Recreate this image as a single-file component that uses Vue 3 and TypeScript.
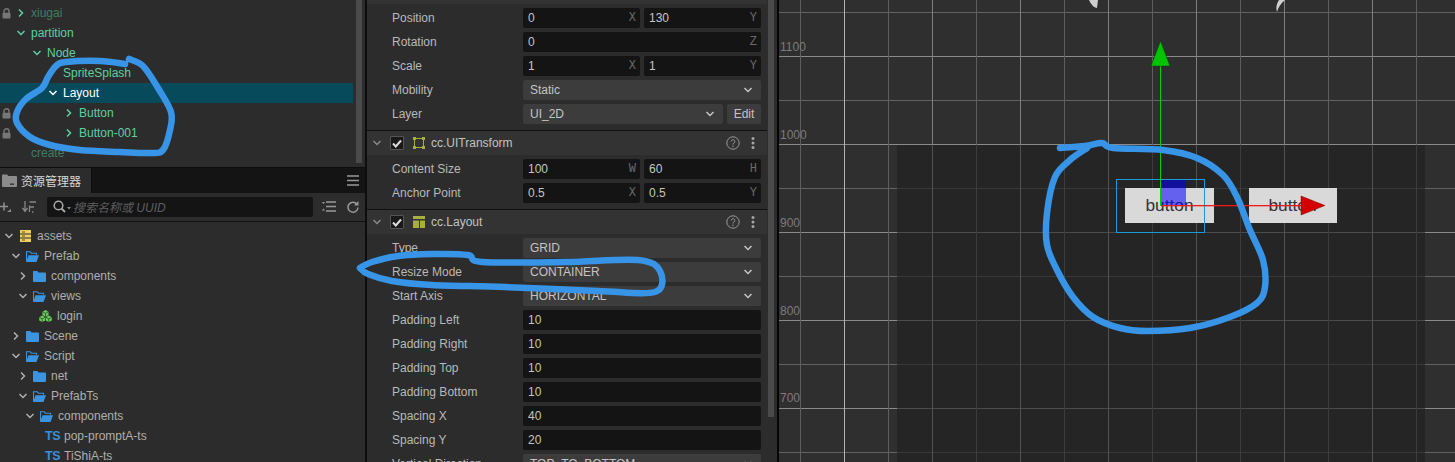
<template>
  <div class="app">
    <!-- left column: hierarchy + assets -->
    <div class="left">
      <div class="hierarchy">
        <div class="node-list">
          <div
            v-for="n in nodes"
            :key="n.name"
            class="node-row"
            :class="{ selected: n.selected, dim: n.dim }"
          >
            <span class="lock-cell">
              <svg v-if="n.locked" width="9" height="11" viewBox="0 0 9 11">
                <path d="M2 5V3.2a2.5 2.5 0 0 1 5 0V5" fill="none" stroke="#777" stroke-width="1.4" />
                <rect x="0.5" y="4.8" width="8" height="5.7" rx="1" fill="#777" />
              </svg>
            </span>
            <span class="indent" :style="{ width: n.depth * 16 + 'px' }"></span>
            <span class="chev-cell">
              <svg v-if="n.open !== undefined" width="10" height="10" viewBox="0 0 10 10">
                <path :d="n.open ? chevDown : chevRight" fill="none" stroke="currentColor" stroke-width="1.5" />
              </svg>
            </span>
            <span class="node-name">{{ n.name }}</span>
          </div>
        </div>
        <div class="hier-scroll"></div>
      </div>

      <div class="tab-bar">
        <div class="tab">
          <svg width="15" height="13" viewBox="0 0 15 13">
            <path d="M0 1.5A1 1 0 0 1 1 .5h4l1.5 1.5H14a1 1 0 0 1 1 1V12a1 1 0 0 1-1 1H1a1 1 0 0 1-1-1z" fill="#8c8c8c" />
            <rect x="8" y="9.5" width="4" height="1.3" fill="#2c2c2c" />
          </svg>
          <span>资源管理器</span>
        </div>
        <svg class="menu-icon" width="12" height="11" viewBox="0 0 12 11">
          <path d="M0 1h12M0 5.5h12M0 10h12" stroke="#999" stroke-width="1.6" />
        </svg>
      </div>

      <div class="toolbar">
        <svg class="tb-add" width="11" height="12" viewBox="0 0 11 12">
          <path d="M0 5.5h8M4 1.5v8" stroke="#8e8e8e" stroke-width="1.6" fill="none" />
          <path d="M7 11h4V8z" fill="#8e8e8e" />
        </svg>
        <svg class="tb-sort" width="15" height="12" viewBox="0 0 15 12">
          <path d="M3 0v9M.5 7 3 10.5 5.5 7M7.5 1H14M7.5 4.5V11M7.5 6H12M10 11h1.5" stroke="#858585" stroke-width="1.3" fill="none" />
        </svg>
        <div class="search">
          <svg width="19" height="13" viewBox="0 0 19 13">
            <circle cx="5.5" cy="5.5" r="4.3" fill="none" stroke="#aaa" stroke-width="1.5" />
            <path d="M8.5 8.5 12 12" stroke="#aaa" stroke-width="1.8" />
            <path d="M14 7h4l-2 2.5z" fill="#888" />
          </svg>
          <span>搜索名称或 UUID</span>
        </div>
        <svg class="tb-list" width="14" height="11" viewBox="0 0 14 11">
          <path d="M4 1h10M4 5.5h10M4 10h10" stroke="#999" stroke-width="1.3" />
          <path d="M0 1h3L1.5 3zM0 9.5h3L1.5 7.5z" fill="#999" />
        </svg>
        <svg class="tb-refresh" width="12" height="12" viewBox="0 0 12 12">
          <path d="M10 3.2A5 5 0 1 0 11 6.5" fill="none" stroke="#999" stroke-width="1.5" />
          <path d="M11.5 0v4.5H7z" fill="#999" />
        </svg>
      </div>

      <div class="asset-list">
        <div v-for="(a, i) in assets" :key="i" class="asset-row">
          <span class="indent" :style="{ width: a.depth * 7 + 'px' }"></span>
          <span class="asset-chev">
            <svg v-if="a.open !== undefined" width="10" height="10" viewBox="0 0 10 10">
              <path :d="a.open ? chevDown : chevRight" fill="none" stroke="#b0b0b0" stroke-width="1.5" />
            </svg>
          </span>
          <svg v-if="a.icon === 'db'" class="asset-icon db" width="11" height="12" viewBox="0 0 11 12">
            <rect width="11" height="12" fill="#f3cf62" />
            <path d="M0 4h11M0 8h11" stroke="#2c2c2c" stroke-width="1" />
            <path d="M2 2h3M2 6h3M2 10h3" stroke="#5b4a1a" stroke-width="1" />
          </svg>
          <svg v-else-if="a.icon === 'closed'" class="asset-icon" width="13" height="11" viewBox="0 0 13 11">
            <path d="M0 .8A.8.8 0 0 1 .8 0h3.5l1.2 1.5H12a1 1 0 0 1 1 1V10a1 1 0 0 1-1 1H1a1 1 0 0 1-1-1z" fill="#3a94e0" />
          </svg>
          <svg v-else-if="a.icon === 'opened'" class="asset-icon" width="13" height="11" viewBox="0 0 13 11">
            <path d="M.5 10V.8h3.8l1.2 1.5h5v1.500" fill="none" stroke="#3a94e0" stroke-width="1.1" />
            <path d="M0 11 2.5 4.2H13L10.5 11z" fill="#3a94e0" />
          </svg>
          <svg v-else-if="a.icon === 'prefab'" class="asset-icon prefab" width="13" height="12" viewBox="0 0 13 12">
            <path d="M6.5 0 9.5 1.7V5L6.5 6.7 3.5 5V1.7zM3.2 5.5l3 1.7v3.3L3.2 12 .2 10.5V7.2zM9.8 5.5l3 1.7v3.3L9.8 12l-3-1.5V7.2z" fill="#6ccb5f" />
            <path d="M3.5 1.7 6.5 3.4 9.5 1.7M6.5 3.4V6.7M.2 7.2l3 1.7 3-1.7M3.2 8.9V12M6.8 7.2l3 1.7 3-1.7M9.8 8.9V12" fill="none" stroke="#1f4d1c" stroke-width=".8" />
          </svg>
          <span v-else-if="a.icon === 'ts'" class="ts-icon">TS</span>
          <span class="asset-name">{{ a.name }}</span>
        </div>
      </div>
    </div>

    <!-- inspector -->
    <div class="inspector">
      <div class="top-sliver"></div>
      <section v-for="s in sections" :key="s.title || 'node'" class="section">
        <header v-if="s.title" class="sec-head">
          <svg width="10" height="10" viewBox="0 0 10 10">
            <path :d="chevDown" fill="none" stroke="#8a8a8a" stroke-width="1.5" />
          </svg>
          <span class="check">
            <svg width="10" height="9" viewBox="0 0 10 9">
              <path d="M1 4.5 3.8 7.5 9 1.5" fill="none" stroke="#ddd" stroke-width="2" />
            </svg>
          </span>
          <svg v-if="s.icon === 'transform'" class="sec-icon" width="12" height="12" viewBox="0 0 12 12">
            <rect x="1.5" y="1.5" width="9" height="9" fill="none" stroke="#a7b03a" stroke-width="1" />
            <path d="M0 0h3v3H0zM9 0h3v3H9zM0 9h3v3H0zM9 9h3v3H9z" fill="#a7b03a" />
          </svg>
          <svg v-else class="sec-icon" width="12" height="12" viewBox="0 0 12 12">
            <path d="M0 0h12v3H0zM0 4.5h6V12H0zM7 4.5h5V12H7z" fill="#a7b03a" />
          </svg>
          <span class="sec-title">{{ s.title }}</span>
          <svg class="help" width="14" height="14" viewBox="0 0 14 14">
            <circle cx="7" cy="7" r="6.2" fill="none" stroke="#9a9a9a" stroke-width="1" />
            <path d="M5.2 5.5a1.8 1.8 0 1 1 2.8 1.5c-.7.4-1 .7-1 1.5" fill="none" stroke="#9a9a9a" stroke-width="1" />
            <circle cx="7" cy="10.3" r=".7" fill="#9a9a9a" />
          </svg>
          <svg class="dots" width="4" height="12" viewBox="0 0 4 12">
            <circle cx="2" cy="1.5" r="1.5" fill="#a5a5a5" />
            <circle cx="2" cy="6" r="1.5" fill="#a5a5a5" />
            <circle cx="2" cy="10.5" r="1.5" fill="#a5a5a5" />
          </svg>
        </header>
        <div class="sec-body">
          <div v-for="r in s.rows" :key="r.label" class="prop">
            <label class="prop-label">{{ r.label }}</label>
            <div class="prop-fields">
              <div
                v-for="(f, fi) in r.fields"
                :key="fi"
                class="field"
                :class="'field-' + f.kind"
              >
                <span class="field-value">{{ f.value }}</span>
                <span v-if="f.suffix" class="suffix">{{ f.suffix }}</span>
                <svg v-if="f.kind === 'select'" width="10" height="10" viewBox="0 0 10 10">
                  <path :d="chevDown" fill="none" stroke="#c4c4c4" stroke-width="1.5" />
                </svg>
              </div>
            </div>
          </div>
        </div>
      </section>
    </div>

    <div class="gutter"><div class="insp-scroll"></div></div>

    <!-- scene view -->
    <div class="scene">
      <svg width="676" height="462" viewBox="779 0 676 462" shape-rendering="crispEdges">
        <rect x="779" y="0" width="676" height="462" fill="#2f2f2f" />
        <line v-for="l in hLines" :key="'h' + l.y" x1="779" x2="1455" :y1="l.y + 0.5" :y2="l.y + 0.5" :stroke="l.color" />
        <line v-for="l in vLines" :key="'v' + l.x" :x1="l.x + 0.5" :x2="l.x + 0.5" y1="0" y2="462" :stroke="l.color" />
        <rect x="897" y="145" width="528" height="317" fill="#252525" />
        <line v-for="l in hLines.filter(h => h.y > 144)" :key="'dh' + l.y" x1="897" x2="1425" :y1="l.y + 0.5" :y2="l.y + 0.5" :stroke="l.dark" />
        <line v-for="l in vLines.filter(v => v.x > 897 && v.x < 1425)" :key="'dv' + l.x" :x1="l.x + 0.5" :x2="l.x + 0.5" y1="145" y2="462" :stroke="l.dark" />

        <text v-for="t in rulers" :key="t.label" x="780" :y="t.y" class="ruler">{{ t.label }}</text>

        <g shape-rendering="auto">
          <path d="M1089 0H1098L1097 8Q1092 7 1089 0Z" fill="#cfcfcf" />
          <path d="M1279 0H1285Q1279 5 1277 12Q1275 6 1279 0Z" fill="#cfcfcf" />
        </g>

        <!-- the two buttons -->
        <rect x="1125" y="188" width="89" height="35" rx="1" fill="#d9d9d9" />
        <rect x="1249" y="188" width="88" height="35" rx="1" fill="#d9d9d9" />
        <text x="1169.5" y="211" class="btn-text" text-anchor="middle">button</text>
        <text x="1292.5" y="211" class="btn-text" text-anchor="middle">button</text>

        <!-- gizmo -->
        <rect x="1161" y="180" width="25" height="25" fill="#0000ff" fill-opacity="0.55" />
        <rect x="1116.5" y="179.5" width="88" height="52.5" fill="none" stroke="#1c9ad6" />
        <rect x="1160" y="64" width="1" height="142" fill="#00d000" />
        <rect x="1161" y="205" width="142" height="1" fill="#f01818" />
        <rect x="1161" y="206" width="142" height="1" fill="#f01818" fill-opacity="0.3" />
        <g shape-rendering="auto">
          <path d="M1160.5 41 1170 66H1151Z" fill="#00c400" stroke="#0a3a0a" stroke-width="0.5" />
          <path d="M1325 205.5 1301 196V215Z" fill="#d40000" stroke="#7a0a0a" stroke-width="0.5" />
        </g>
      </svg>
    </div>

    <!-- hand drawn marks on top of everything -->
    <svg class="ink" width="1455" height="462" viewBox="0 0 1455 462">
      <path v-for="(d, i) in inkPaths" :key="i" :d="d" fill="none" stroke="#3794e6" stroke-width="6.5" stroke-linecap="round" stroke-linejoin="round" />
    </svg>
  </div>
</template>

<script setup lang="ts">
type Pt = [number, number]

interface TreeNode {
  name: string
  depth: number
  open?: boolean
  locked?: boolean
  dim?: boolean
  selected?: boolean
}

interface Asset {
  name: string
  depth: number
  open?: boolean
  icon: 'db' | 'closed' | 'opened' | 'prefab' | 'ts'
}

interface Field {
  kind: 'input' | 'select' | 'button'
  value: string
  suffix?: string
}

const chevDown = 'M1.5 3 5 6.5 8.5 3'
const chevRight = 'M3 1.5 6.5 5 3 8.5'

const nodes: TreeNode[] = [
  { name: 'xiugai', depth: 0, open: false, locked: true, dim: true },
  { name: 'partition', depth: 0, open: true },
  { name: 'Node', depth: 1, open: true },
  { name: 'SpriteSplash', depth: 2 },
  { name: 'Layout', depth: 2, open: true, selected: true },
  { name: 'Button', depth: 3, open: false, locked: true },
  { name: 'Button-001', depth: 3, open: false, locked: true },
  { name: 'create', depth: 0, dim: true }
]

const assets: Asset[] = [
  { name: 'assets', depth: 0, open: true, icon: 'db' },
  { name: 'Prefab', depth: 1, open: true, icon: 'opened' },
  { name: 'components', depth: 2, open: false, icon: 'closed' },
  { name: 'views', depth: 2, open: true, icon: 'opened' },
  { name: 'login', depth: 3, icon: 'prefab' },
  { name: 'Scene', depth: 1, open: false, icon: 'closed' },
  { name: 'Script', depth: 1, open: true, icon: 'opened' },
  { name: 'net', depth: 2, open: false, icon: 'closed' },
  { name: 'PrefabTs', depth: 2, open: true, icon: 'opened' },
  { name: 'components', depth: 3, open: true, icon: 'opened' },
  { name: 'pop-promptA-ts', depth: 4, icon: 'ts' },
  { name: 'TiShiA-ts', depth: 4, icon: 'ts' }
]

const input = (value: string, suffix?: string): Field => ({ kind: 'input', value, suffix })
const select = (value: string): Field => ({ kind: 'select', value })

const sections = [
  {
    title: '',
    icon: '',
    rows: [
      { label: 'Position', fields: [input('0', 'X'), input('130', 'Y')] },
      { label: 'Rotation', fields: [input('0', 'Z')] },
      { label: 'Scale', fields: [input('1', 'X'), input('1', 'Y')] },
      { label: 'Mobility', fields: [select('Static')] },
      { label: 'Layer', fields: [select('UI_2D'), { kind: 'button', value: 'Edit' } as Field] }
    ]
  },
  {
    title: 'cc.UITransform',
    icon: 'transform',
    rows: [
      { label: 'Content Size', fields: [input('100', 'W'), input('60', 'H')] },
      { label: 'Anchor Point', fields: [input('0.5', 'X'), input('0.5', 'Y')] }
    ]
  },
  {
    title: 'cc.Layout',
    icon: 'layout',
    rows: [
      { label: 'Type', fields: [select('GRID')] },
      { label: 'Resize Mode', fields: [select('CONTAINER')] },
      { label: 'Start Axis', fields: [select('HORIZONTAL')] },
      { label: 'Padding Left', fields: [input('10')] },
      { label: 'Padding Right', fields: [input('10')] },
      { label: 'Padding Top', fields: [input('10')] },
      { label: 'Padding Bottom', fields: [input('10')] },
      { label: 'Spacing X', fields: [input('40')] },
      { label: 'Spacing Y', fields: [input('20')] },
      { label: 'Vertical Direction', fields: [select('TOP_TO_BOTTOM')] }
    ]
  }
]

// grid of the scene, 44px apart; every second line is stronger
const hLines = Array.from({ length: 11 }, (_, i) => {
  const y = 12 + i * 44
  const major = i % 2 === 1
  return { y, color: major ? '#8a8a8a' : '#626262', dark: major ? '#4c4c4c' : '#383838' }
})

const vLines = Array.from({ length: 15 }, (_, i) => {
  const x = 800 + i * 44
  const major = i % 2 === 1
  const color = x === 844 ? '#b4b4b4' : major ? '#808080' : '#5e5e5e'
  return { x, color, dark: major ? '#525252' : '#3d3d3d' }
})

const rulers = [
  { label: '1100', y: 51 },
  { label: '1000', y: 139 },
  { label: '900', y: 227 },
  { label: '800', y: 315 },
  { label: '700', y: 402 }
]

// smooth line through the points of a pen stroke
function smooth(pts: Pt[]): string {
  let d = `M${pts[0][0]} ${pts[0][1]}`
  for (let i = 0; i < pts.length - 1; i++) {
    const p0 = pts[Math.max(i - 1, 0)]
    const p1 = pts[i]
    const p2 = pts[i + 1]
    const p3 = pts[Math.min(i + 2, pts.length - 1)]
    const c1x = p1[0] + (p2[0] - p0[0]) / 6
    const c1y = p1[1] + (p2[1] - p0[1]) / 6
    const c2x = p2[0] - (p3[0] - p1[0]) / 6
    const c2y = p2[1] - (p3[1] - p1[1]) / 6
    d += ` C${c1x.toFixed(1)} ${c1y.toFixed(1)} ${c2x.toFixed(1)} ${c2y.toFixed(1)} ${p2[0]} ${p2[1]}`
  }
  return d
}

const inkPaths = [
  smooth([
    [129, 59], [143, 66], [158, 88], [171, 112], [170, 130], [163, 150], [150, 153], [120, 152],
    [80, 150], [50, 145], [30, 137], [17, 123], [17, 112], [26, 99], [42, 88], [48, 77],
    [56, 66], [66, 62], [100, 61], [125, 64]
  ]),
  smooth([
    [360, 268], [372, 262], [398, 256], [432, 254], [468, 255], [482, 262], [565, 262], [638, 260],
    [660, 271], [655, 292], [598, 291], [505, 287], [432, 285], [392, 281], [368, 274], [360, 268]
  ]),
  smooth([
    [1060, 148], [1085, 146], [1102, 143], [1113, 148], [1163, 150], [1197, 158], [1223, 175], [1237, 197],
    [1250, 230], [1263, 260], [1265, 287], [1257, 303], [1230, 317], [1190, 328], [1147, 331],
    [1120, 328], [1093, 317], [1073, 297], [1057, 270], [1047, 245], [1047, 213], [1055, 177],
    [1070, 160], [1087, 148]
  ])
]
</script>

<style scoped>
.app {
  position: relative;
  display: flex;
  width: 1455px;
  height: 462px;
  overflow: hidden;
  background: #2c2c2c;
  font-family: "Liberation Sans", "Noto Sans CJK SC", sans-serif;
  font-size: 12px;
  color: #b9b9b9;
}

.left {
  width: 365px;
  flex: none;
  display: flex;
  flex-direction: column;
}

/* hierarchy */
.hierarchy {
  height: 168px;
  flex: none;
  display: flex;
  box-sizing: border-box;
  padding-top: 3px;
  border-bottom: 1px solid #0d0d0d;
}

.node-list {
  width: 353px;
  flex: none;
}

.node-row {
  display: flex;
  align-items: center;
  height: 20px;
  color: #5fcfa3;
}

.node-row.dim .node-name {
  color: #3f7d63;
}

.node-row.selected {
  background: #074a5b;
  color: #fff;
}

.lock-cell {
  width: 16px;
  flex: none;
  padding-left: 2px;
  box-sizing: border-box;
  display: flex;
  align-items: center;
}

.indent {
  flex: none;
}

.chev-cell {
  width: 15px;
  flex: none;
  display: flex;
  align-items: center;
}

.hier-scroll {
  width: 6px;
  height: 163px;
  margin-left: 3px;
  margin-top: -3px;
  background: #4a4a4a;
}

/* assets */
.tab-bar {
  height: 25px;
  flex: none;
  display: flex;
  align-items: center;
  justify-content: space-between;
  background: #141414;
}

.tab {
  width: 92px;
  height: 100%;
  box-sizing: border-box;
  display: flex;
  align-items: center;
  gap: 4px;
  padding-left: 2px;
  background: #2c2c2c;
  border-right: 1px solid #0d0d0d;
  font-size: 12px;
  color: #d6d6d6;
  white-space: nowrap;
}

.menu-icon {
  margin-right: 6px;
}

.toolbar {
  height: 29px;
  flex: none;
  box-sizing: border-box;
  display: flex;
  align-items: center;
  border-bottom: 1px solid #111;
  padding-bottom: 1px;
}

.tb-add {
  margin-right: 11px;
}

.tb-sort {
  margin-right: 10px;
}

.search {
  width: 266px;
  height: 20px;
  flex: none;
  display: flex;
  align-items: center;
  gap: 1px;
  padding-left: 6px;
  box-sizing: border-box;
  border-radius: 2px;
  background: #141414;
  font-size: 12px;
  font-style: italic;
  color: #5e5e5e;
}

.tb-list {
  margin-left: 9px;
}

.tb-refresh {
  margin-left: 11px;
}

.asset-list {
  padding-top: 4px;
}

.asset-row {
  display: flex;
  align-items: center;
  height: 20px;
  padding-left: 4px;
  color: #aeaeae;
}

.asset-chev {
  width: 12px;
  flex: none;
  display: flex;
  align-items: center;
}

.asset-icon {
  flex: none;
  margin: 0 5px 0 3px;
}

.asset-icon.db {
  margin: 0 6px 0 4px;
}

.asset-icon.prefab {
  margin: 0 5px 0 2px;
}

.ts-icon {
  width: 15px;
  flex: none;
  margin: 0 4px 0 1px;
  font-size: 12.5px;
  font-weight: 700;
  color: #3a8fd8;
  letter-spacing: -0.5px;
}

/* inspector */
.inspector {
  width: 402px;
  flex: none;
  box-sizing: border-box;
  border-left: 2px solid #0d0d0d;
  overflow: hidden;
}

.top-sliver {
  height: 4px;
  background: #333;
}

.sec-head {
  height: 24px;
  display: flex;
  align-items: center;
  padding-left: 5px;
  background: #333;
  border-top: 1px solid #111;
}

.check {
  width: 12px;
  height: 12px;
  margin-left: 8px;
  display: flex;
  align-items: center;
  justify-content: center;
  background: #191919;
  border: 1px solid #555;
  border-radius: 1px;
}

.sec-icon {
  margin-left: 9px;
}

.sec-title {
  margin-left: 6px;
  flex: 1;
  color: #c2c2c2;
}

.help {
  margin-right: 11px;
}

.dots {
  margin-right: 12px;
}

.sec-body {
  display: flex;
  flex-direction: column;
  gap: 4px;
  padding: 4px 6px 6px 25px;
}

.prop {
  display: flex;
  align-items: center;
  height: 20px;
}

.prop-label {
  width: 131px;
  flex: none;
  color: #b9b9b9;
}

.prop-fields {
  flex: 1;
  display: flex;
  gap: 4px;
  min-width: 0;
}

.field {
  flex: 1;
  height: 20px;
  display: flex;
  align-items: center;
  justify-content: space-between;
  box-sizing: border-box;
  border-radius: 2px;
  min-width: 0;
}

.field-input {
  padding: 0 4px 0 5px;
  background: #141414;
  color: #c4c4c4;
}

.field-select {
  padding: 0 8px 0 7px;
  background: #3c3c3c;
  color: #c4c4c4;
}

.field-button {
  flex: none;
  width: 34px;
  justify-content: center;
  background: #3c3c3c;
  color: #c4c4c4;
}

.suffix {
  font-family: "Liberation Mono", monospace;
  font-size: 12px;
  color: #6a6a6a;
}

.gutter {
  width: 12px;
  flex: none;
  box-sizing: border-box;
  border-right: 2px solid #050505;
}

.insp-scroll {
  width: 6px;
  height: 417px;
  margin-left: 1px;
  background: #4a4a4a;
}

/* scene */
.scene {
  flex: 1;
  min-width: 0;
  height: 462px;
}

.scene svg {
  display: block;
}

.ruler {
  font-size: 12px;
  fill: #7c7c7c;
}

.btn-text {
  font-size: 17.3px;
  fill: #333;
}

.ink {
  position: absolute;
  left: 0;
  top: 0;
  pointer-events: none;
}
</style>

<style>
html,
body {
  margin: 0;
  background: #2c2c2c;
}
</style>
